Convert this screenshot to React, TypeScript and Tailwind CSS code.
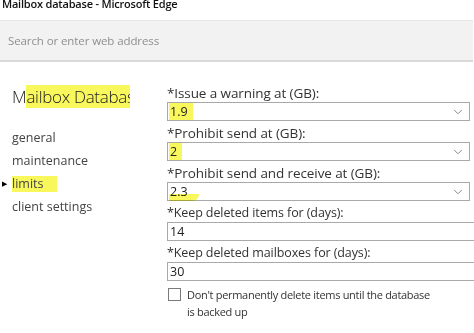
import { ChevronDown } from 'lucide-react'

const FONT = { fontFamily: '"Open Sans", "Noto Sans", Arial, sans-serif' }

interface Field {
  label: string
  value: string
  select?: boolean
  mark?: 'box' | 'swoosh'
}

const fields: Field[] = [
  { label: '*Issue a warning at (GB):', value: '1.9', select: true, mark: 'box' },
  { label: '*Prohibit send at (GB):', value: '2', select: true, mark: 'box' },
  { label: '*Prohibit send and receive at (GB):', value: '2.3', select: true, mark: 'swoosh' },
  { label: '*Keep deleted items for (days):', value: '14' },
  { label: '*Keep deleted mailboxes for (days):', value: '30' },
]

const nav = ['general', 'maintenance', 'limits', 'client settings']

export default function App() {
  return (
    <div style={FONT} className="w-[474px] h-[333px] overflow-hidden bg-white text-[#333]">
      {/* Window title */}
      <div className="h-[20px] pl-[2px] flex flex-col">
        <div className="-mt-[4px] text-[11px] leading-4 font-semibold text-[#111] tracking-[-0.2px] whitespace-nowrap">
          Mailbox database - Microsoft Edge
        </div>
      </div>

      {/* Address bar */}
      <div className="w-[473px] h-[42px] bg-[#f2f2f2] border-t border-[#e6e6e6] border-b-2 border-b-[#dadada] flex items-center pl-[8px]">
        <span className="text-[11.5px] text-[#8f8f8f] tracking-[-0.1px]">Search or enter web address</span>
      </div>

      <div className="flex pt-[23px]">
        {/* Left nav */}
        <div className="w-[130px] shrink-0 overflow-hidden pl-[12px] relative">
          <div className="whitespace-nowrap text-[17px] leading-6 font-light text-[#222] tracking-[-0.3px]">
            M<span className="bg-[#f8f85c]">ailbox Database</span>
          </div>
          <div className="mt-[17px] flex flex-col">
            {nav.map(n => (
              <div key={n} className="relative h-[23px] leading-[23px] text-[12.5px] text-[#444] whitespace-nowrap">
                {n === 'limits' ? (
                  <>
                    <span className="absolute -left-[10px] top-0 text-[7px] text-black">▶</span>
                    <span className="inline-block bg-[#f8f85c] pr-[14px] leading-[16px]">limits</span>
                  </>
                ) : (
                  n
                )}
              </div>
            ))}
          </div>
        </div>

        {/* Form */}
        <div className="ml-[37px] flex-1 flex flex-col">
          {fields.map(f => (
            <div key={f.label} className="mb-[4px]">
              <div
                className={`h-4 leading-4 text-[#333] whitespace-nowrap tracking-[-0.1px] ${
                  f.select ? 'text-[13.5px]' : 'text-[12.5px]'
                }`}
              >
                {f.label}
              </div>
              <div
                className={`mt-[1px] h-[19px] border border-[#a9a9a9] flex items-center relative ${
                  f.select ? 'w-[303px]' : 'w-[330px] border-r-0'
                }`}
              >
                <span
                  className={`ml-[1px] px-[1px] text-[12.5px] leading-[17px] text-[#222] ${
                    f.mark === 'box' ? 'bg-[#f8f85c] pr-[5px]' : ''
                  }`}
                >
                  {f.value}
                </span>
                {f.mark === 'swoosh' && (
                  <span className="absolute left-[1px] top-[11px] w-[30px] h-[7px] bg-[#f8f85c] rounded-br-[10px] mix-blend-multiply" />
                )}
                {f.select && (
                  <ChevronDown className="absolute right-[4px] top-[2px] w-[14px] h-[14px] text-[#777]" strokeWidth={1.5} />
                )}
              </div>
            </div>
          ))}

          <div className="mt-[2px] flex items-start">
            <div className="w-[13px] h-[13px] border border-[#7a7a7a] bg-white mt-[1px] ml-[1px] shrink-0" />
            <div className="ml-[6px] text-[11px] leading-[17px] text-[#333] -mt-[1px] tracking-[-0.3px] whitespace-nowrap">
              Don't permanently delete items until the database
              <br />
              is backed up
            </div>
          </div>
        </div>
      </div>
    </div>
  )
}
